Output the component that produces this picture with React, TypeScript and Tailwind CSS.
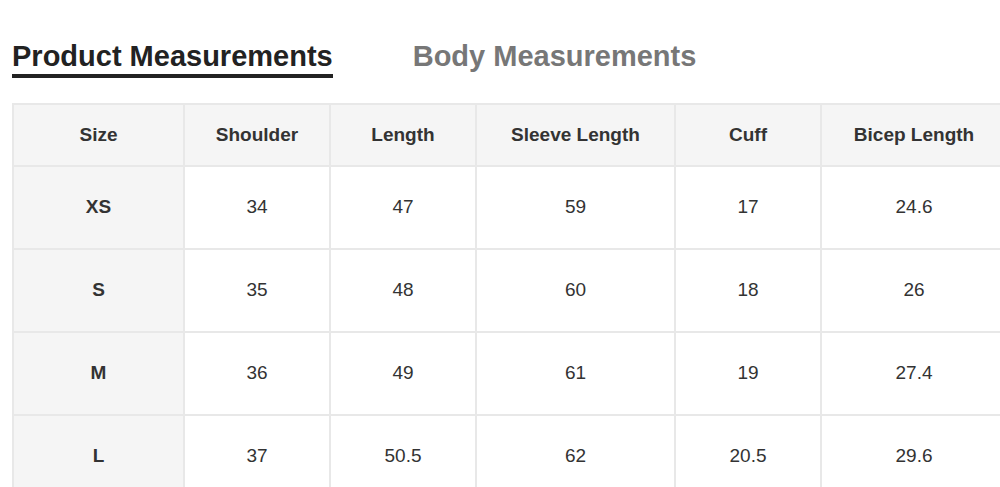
const columns = [
  { label: "Size", width: 171 },
  { label: "Shoulder", width: 146 },
  { label: "Length", width: 146 },
  { label: "Sleeve Length", width: 199 },
  { label: "Cuff", width: 146 },
  { label: "Bicep Length", width: 186 },
];

const rows = [
  ["XS", "34", "47", "59", "17", "24.6"],
  ["S", "35", "48", "60", "18", "26"],
  ["M", "36", "49", "61", "19", "27.4"],
  ["L", "37", "50.5", "62", "20.5", "29.6"],
];

const tableWidth = columns.reduce((s, c) => s + c.width, 0);

export default function App() {
  return (
    <div
      className="h-[487px] w-[1000px] overflow-hidden bg-white"
      style={{ fontFamily: '"Liberation Sans", Arial, sans-serif' }}
    >
      <div className="flex items-start gap-[80px] pl-3 pt-[40px]">
        <div className="border-b-[4px] border-[#222] pb-[1px] text-[29px] font-bold leading-[33px] text-[#222]">
          Product Measurements
        </div>
        <div className="text-[29px] font-bold leading-[33px] text-[#777]">Body Measurements</div>
      </div>

      <div className="ml-3 mt-[25px] w-max">
        <table className="border-collapse text-[#333]" style={{ tableLayout: "fixed", width: tableWidth }}>
          <colgroup>
            {columns.map((c) => (
              <col key={c.label} style={{ width: c.width }} />
            ))}
          </colgroup>
          <thead>
            <tr className="h-[62px] bg-[#f5f5f5]">
              {columns.map((c) => (
                <th key={c.label} className="border-2 border-[#e8e8e8] text-center text-[19px] font-bold">
                  {c.label}
                </th>
              ))}
            </tr>
          </thead>
          <tbody>
            {rows.map((r) => (
              <tr key={r[0]} className="h-[83px]">
                {r.map((v, i) => (
                  <td
                    key={i}
                    className={
                      i === 0
                        ? "border-2 border-[#e8e8e8] bg-[#f5f5f5] text-center text-[19px] font-bold"
                        : "border-2 border-[#e8e8e8] text-center text-[19px]"
                    }
                  >
                    {v}
                  </td>
                ))}
              </tr>
            ))}
          </tbody>
        </table>
      </div>
    </div>
  );
}
